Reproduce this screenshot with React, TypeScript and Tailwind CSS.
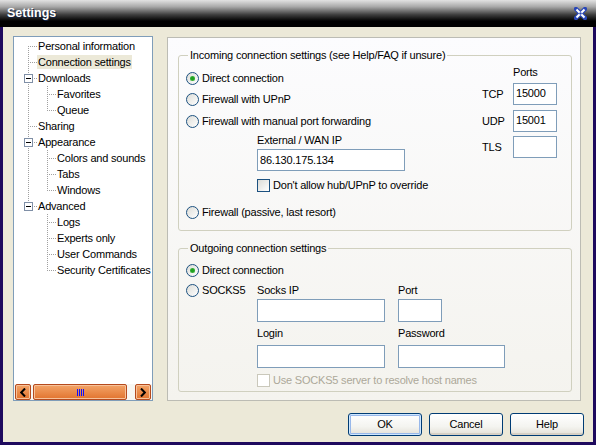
import type { ReactNode } from "react";

type ConnProps = {
  x: number;
  w: number;
  top?: boolean;
  bottom?: boolean;
  horiz?: boolean;
  box?: boolean;
};

// one 16px-high cell of the tree's dotted connector lines
function Connector({ x, w, top, bottom, horiz, box }: ConnProps) {
  const dots: ReactNode[] = [];
  const dot = (px: number, py: number) =>
    dots.push(<rect key={`${px}-${py}`} x={px} y={py} width={1} height={1} />);
  for (let y = 0; y < 16; y += 2) {
    if (box && y >= 4 && y <= 12) continue;
    if (top && y <= 8) dot(x, y);
    if (bottom && y >= 8) dot(x, y);
  }
  if (horiz) for (let px = box ? x + 6 : x + 2; px < w; px += 2) dot(px, 8);
  return (
    <svg width={w} height={16} className="shrink-0" shapeRendering="crispEdges">
      <g fill="#a0a0a0">{dots}</g>
      {box && (
        <>
          <rect x={x - 3.5} y={4.5} width={8} height={8} fill="#fff" stroke="#7f8fa6" />
          <rect x={x - 2} y={8} width={5} height={1} fill="#000" />
        </>
      )}
    </svg>
  );
}

interface TreeNode {
  label: string;
  selected?: boolean;
  children?: string[];
}

const tree: TreeNode[] = [
  { label: "Personal information" },
  { label: "Connection settings", selected: true },
  { label: "Downloads", children: ["Favorites", "Queue"] },
  { label: "Sharing" },
  { label: "Appearance", children: ["Colors and sounds", "Tabs", "Windows"] },
  { label: "Advanced", children: ["Logs", "Experts only", "User Commands", "Security Certificates"] },
];

function TreeLabel({ label, selected }: { label: string; selected?: boolean }) {
  return (
    <span
      className={
        selected
          ? "h-[14px] whitespace-nowrap bg-[#ece9d8] px-[1px] leading-[14px]"
          : "h-[14px] whitespace-nowrap px-[1px] leading-[14px]"
      }
    >
      {label}
    </span>
  );
}

function Tree() {
  const rows: ReactNode[] = [];
  tree.forEach((node, i) => {
    const first = i === 0;
    const last = i === tree.length - 1;
    rows.push(
      <div key={node.label} className="flex h-4 items-center">
        <Connector x={14} w={23} top={!first} bottom={!last} horiz box={!!node.children} />
        <TreeLabel label={node.label} selected={node.selected} />
      </div>
    );
    node.children?.forEach((child, j) => {
      const lastChild = j === node.children!.length - 1;
      rows.push(
        <div key={child} className="flex h-4 items-center">
          <Connector x={14} w={23} top={!last} bottom={!last} />
          <Connector x={10} w={19} top bottom={!lastChild} horiz />
          <TreeLabel label={child} />
        </div>
      );
    });
  });
  return <div className="flex-1 overflow-hidden pt-[1px]">{rows}</div>;
}

function Chevron({ dir }: { dir: "left" | "right" }) {
  return (
    <svg width="6" height="9" viewBox="0 0 6 9">
      <path
        d={dir === "left" ? "M5 0.5 L1.2 4.5 L5 8.5" : "M1 0.5 L4.8 4.5 L1 8.5"}
        stroke="#000"
        strokeWidth="2"
        fill="none"
      />
    </svg>
  );
}

function Scrollbar() {
  return (
    <div className="flex h-4 items-stretch bg-[#f7f6f2] px-[1px]">
      <div className="flex w-4 items-center justify-center rounded-[2px] border border-[#b54a1d] bg-[linear-gradient(#f3a468,#e2742f)] shadow-[inset_0_0_0_1px_#f7c29a]">
        <Chevron dir="left" />
      </div>
      <div className="ml-[2px] flex w-[94px] items-center justify-center rounded-[2px] border border-[#b54a1d] bg-[linear-gradient(#f3a468,#e2742f)] shadow-[inset_0_0_0_1px_#f7c29a]">
        <div className="flex h-[7px] gap-[1px]">
          <span className="w-[1px] bg-[#1010ff]" />
          <span className="w-[1px] bg-[#1010ff]" />
          <span className="w-[1px] bg-[#1010ff]" />
          <span className="w-[1px] bg-[#1010ff]" />
        </div>
      </div>
      <div className="flex-1" />
      <div className="flex w-4 items-center justify-center rounded-[2px] border border-[#b54a1d] bg-[linear-gradient(#f3a468,#e2742f)] shadow-[inset_0_0_0_1px_#f7c29a]">
        <Chevron dir="right" />
      </div>
    </div>
  );
}

function Radio({ checked }: { checked?: boolean }) {
  return (
    <span className="flex h-[13px] w-[13px] shrink-0 items-center justify-center rounded-full border border-[#1c5180] bg-[linear-gradient(135deg,#dcdcd7,#ffffff)]">
      {checked && <span className="h-[5px] w-[5px] rounded-full bg-[#21a121] shadow-[inset_0_0_1px_#8ae08a]" />}
    </span>
  );
}

function Checkbox({ disabled }: { disabled?: boolean }) {
  return (
    <span
      className={
        disabled
          ? "h-[13px] w-[13px] shrink-0 border border-[#cac8bb] bg-white"
          : "h-[13px] w-[13px] shrink-0 border border-[#1c5180] bg-[linear-gradient(135deg,#dcdcd7,#ffffff)]"
      }
    />
  );
}

function RadioRow({ label, checked, className }: { label: string; checked?: boolean; className: string }) {
  return (
    <div className={`flex h-4 items-center gap-[3px] leading-4 ${className}`}>
      <Radio checked={checked} />
      <span className="whitespace-nowrap">{label}</span>
    </div>
  );
}

function Field({ value, className }: { value?: string; className: string }) {
  return (
    <div className={`shrink-0 border border-[#7f9db9] bg-white px-[2px] ${className}`}>{value}</div>
  );
}

function XpButton({ label, isDefault }: { label: string; isDefault?: boolean }) {
  return (
    <button
      className={
        isDefault
          ? "h-[23px] w-[74px] rounded-[3px] border border-[#003c74] bg-[linear-gradient(#ffffff,#f4f4f0_60%,#e3e0d6)] shadow-[inset_0_0_0_1px_#cee7ff,inset_0_0_0_2px_#98b8ea] text-black"
          : "h-[23px] w-[74px] rounded-[3px] border border-[#003c74] bg-[linear-gradient(#ffffff,#f4f4f0_60%,#e3e0d6)] shadow-[inset_0_-2px_0_#d6d0c5] text-black"
      }
    >
      {label}
    </button>
  );
}

export default function App() {
  return (
    <div className="flex h-[445px] w-[596px] flex-col overflow-hidden font-['Liberation_Sans',Arial,sans-serif] text-[11px] tracking-[-0.2px] text-black">
      {/* title bar */}
      <div className="flex h-[27px] shrink-0 items-center justify-between bg-[linear-gradient(#e2e2e2,#a8a8a8_25%,#3c3c3c_55%,#000000_78%)] pl-[7px] pr-[9px]">
        <span className="text-[12.5px] font-bold tracking-normal text-white [text-shadow:1px_1px_#102040]">Settings</span>
        <svg width="13" height="13" viewBox="0 0 13 13" className="mb-[1px]">
          <path d="M2 2 L11 11 M11 2 L2 11" stroke="#2846b8" strokeWidth="4.5" strokeLinecap="round" />
          <path d="M2.5 2.5 L10.5 10.5 M10.5 2.5 L2.5 10.5" stroke="#ffffff" strokeWidth="2" />
          <circle cx="6.5" cy="6.5" r="1.2" fill="#2846b8" />
        </svg>
      </div>

      {/* body */}
      <div className="flex flex-1 flex-col border-x-[3px] border-b-[3px] border-[#1e0a5e] bg-[#ece9d8] pl-[10px] pt-[9px]">
        <div className="flex">
          <div className="flex h-[365px] w-[140px] flex-col border border-[#7f9db9] bg-white">
            <Tree />
            <Scrollbar />
          </div>

          <div className="ml-[14px] mt-[1px] flex h-[364px] w-[414px] flex-col border border-[#bcbcb4] bg-[linear-gradient(#fcfcfe,#f4f3ee)] pl-[10px] pr-[8px] pt-[10px]">
            <fieldset className="rounded-[3px] border border-[#d0d0bf] pb-[10px] pl-[7px] pr-[14px]">
              <legend className="ml-[2px] px-[2px] leading-[14px]">
                Incoming connection settings (see Help/FAQ if unsure)
              </legend>
              <div className="flex">
                <div className="flex flex-1 flex-col">
                  <RadioRow label="Direct connection" checked className="mt-[8px]" />
                  <RadioRow label="Firewall with UPnP" className="mt-[5px]" />
                  <RadioRow label="Firewall with manual port forwarding" className="mt-[6px]" />
                  <div className="ml-[71px] flex flex-col">
                    <span className="mt-[4px] h-[14px] leading-[14px]">External / WAN IP</span>
                    <Field value="86.130.175.134" className="mt-[2px] h-[22px] w-[148px] leading-[20px]" />
                    <div className="mt-[6px] flex h-4 items-center gap-[3px]">
                      <Checkbox />
                      <span>Don't allow hub/UPnP to override</span>
                    </div>
                  </div>
                  <RadioRow label="Firewall (passive, last resort)" className="mt-[11px]" />
                </div>
                <div className="flex w-[75px] flex-col">
                  <span className="ml-[31px] mt-[3px] h-[14px] leading-[14px]">Ports</span>
                  <div className="mt-[4px] flex items-center">
                    <span className="w-[31px]">TCP</span>
                    <Field value="15000" className="h-[22px] w-[44px] leading-[18px]" />
                  </div>
                  <div className="mt-[5px] flex items-center">
                    <span className="w-[31px]">UDP</span>
                    <Field value="15001" className="h-[22px] w-[44px] leading-[18px]" />
                  </div>
                  <div className="mt-[4px] flex items-center">
                    <span className="w-[31px]">TLS</span>
                    <Field className="h-[22px] w-[44px]" />
                  </div>
                </div>
              </div>
            </fieldset>

            <fieldset className="mt-[10px] rounded-[3px] border border-[#d0d0bf] pb-[3px] pl-[7px]">
              <legend className="ml-[2px] px-[2px] leading-[14px]">Outgoing connection settings</legend>
              <RadioRow label="Direct connection" checked className="mt-[7px]" />
              <div className="flex">
                <div className="w-[71px]">
                  <RadioRow label="SOCKS5" className="mt-[4px]" />
                </div>
                <div className="flex flex-col">
                  <div className="mt-[4px] flex h-4 leading-4">
                    <span className="w-[141px]">Socks IP</span>
                    <span>Port</span>
                  </div>
                  <div className="mt-[1px] flex">
                    <Field className="h-[23px] w-[128px]" />
                    <Field className="ml-[13px] h-[23px] w-[44px]" />
                  </div>
                  <div className="mt-[4px] flex h-[14px] leading-[14px]">
                    <span className="w-[141px]">Login</span>
                    <span>Password</span>
                  </div>
                  <div className="mt-[5px] flex">
                    <Field className="h-[23px] w-[128px]" />
                    <Field className="ml-[13px] h-[23px] w-[107px]" />
                  </div>
                  <div className="mt-[4px] flex h-4 items-center gap-[3px] text-[#aca899]">
                    <Checkbox disabled />
                    <span className="whitespace-nowrap">Use SOCKS5 server to resolve host names</span>
                  </div>
                </div>
              </div>
            </fieldset>
          </div>
        </div>

        <div className="mt-[12px] flex justify-end gap-[7px] pr-[9px]">
          <XpButton label="OK" isDefault />
          <XpButton label="Cancel" />
          <XpButton label="Help" />
        </div>
      </div>
    </div>
  );
}
